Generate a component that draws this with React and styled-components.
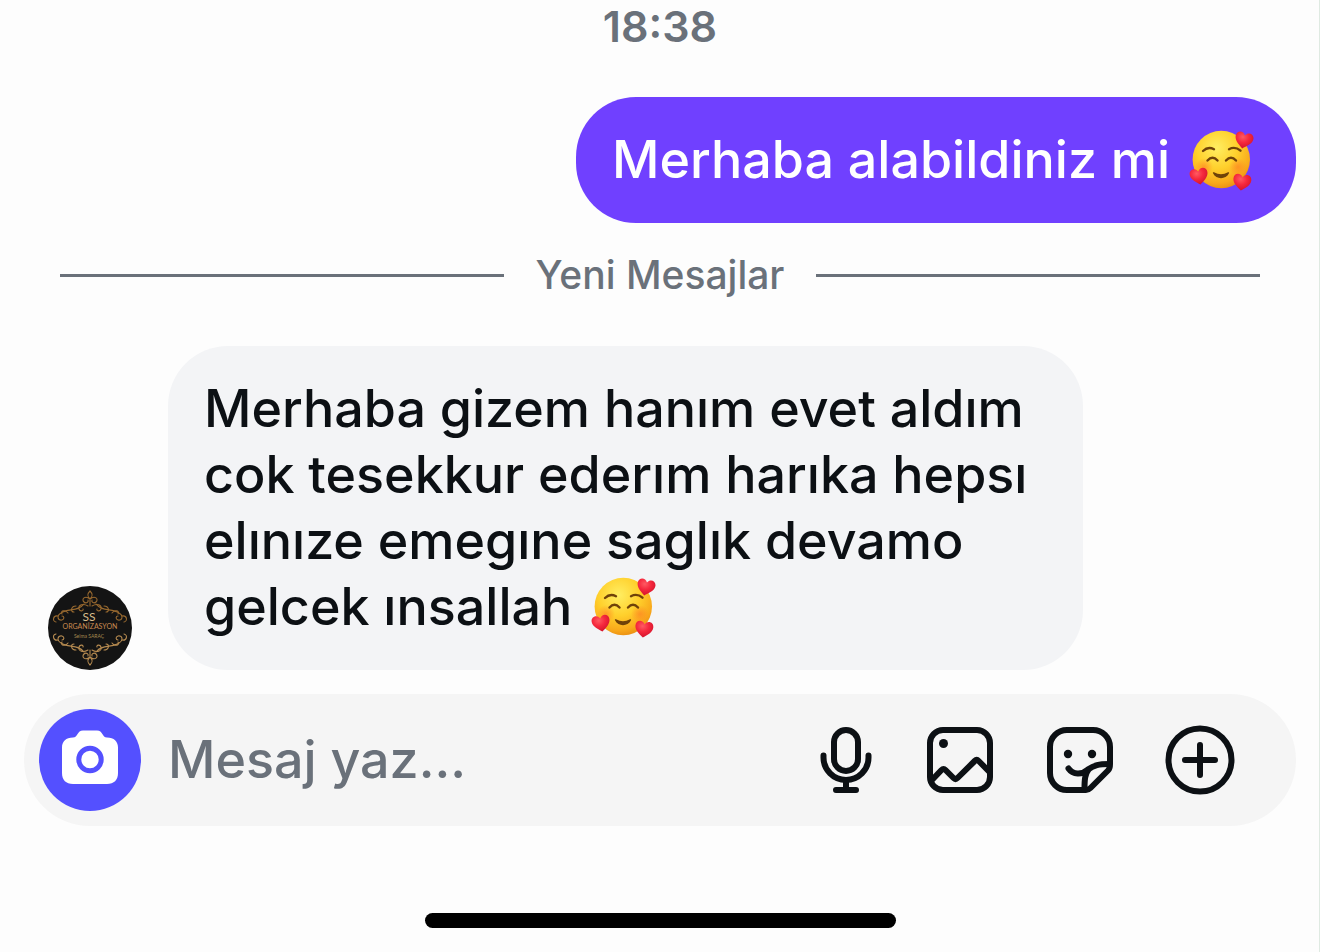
import React from "react";
import styled, { createGlobalStyle } from "styled-components";

const GlobalStyle = createGlobalStyle`
    * {
        box-sizing: border-box;
    }

    body {
        margin: 0;
        background: #fdfdfd;
        color: #0c1014;
        font-family: Inter, "Liberation Sans", sans-serif;
        font-weight: 500;
    }
`;

const Screen = styled.main`
    display: flex;
    flex-direction: column;
    min-height: 100vh;
    box-shadow: inset -1px 0 #dfeae2;
`;

const Time = styled.time`
    padding-top: 2px;
    margin-bottom: 47px;
    color: #6a717a;
    font-size: 43px;
    font-weight: 600;
    line-height: 48px;
    text-align: center;
`;

const Row = styled.div`
    display: flex;
    align-items: flex-end;
    justify-content: ${props => props.$own ? "flex-end" : "flex-start"};
    gap: 36px;
    padding: 0 24px 0 48px;
`;

const Bubble = styled.p`
    max-width: 915px;
    margin: 0;
    padding: 30px 36px;
    border-radius: 60px;
    background: ${props => props.$own ? "#7040ff" : "#f3f4f6"};
    color: ${props => props.$own ? "#ffffff" : "#0c1014"};
    font-size: 52px;
    line-height: 66px;
`;

const EmojiSvg = styled.svg`
    width: 66px;
    height: 66px;
    margin: 0 6px 0 4px;
    vertical-align: top;
`;

const Divider = styled.div`
    display: flex;
    align-items: center;
    gap: 32px;
    margin: 27px 60px 46px;
    color: #6a717a;
    font-size: 39px;
    line-height: 50px;

    &::before,
    &::after {
        content: "";
        flex: 1;
        height: 3px;
        background: #6a717a;
    }
`;

const AvatarSvg = styled.svg`
    flex: none;
    width: 84px;
    height: 84px;
`;

const Composer = styled.form`
    display: flex;
    align-items: center;
    gap: 48px;
    height: 132px;
    margin: 24px 24px 0;
    padding: 0 60px 0 15px;
    border-radius: 66px;
    background: #f5f5f5;
`;

const Field = styled.div`
    display: flex;
    flex: 1;
    align-items: center;
    gap: 27px;
    min-width: 0;
`;

const CameraButton = styled.button`
    display: flex;
    flex: none;
    align-items: center;
    justify-content: center;
    width: 102px;
    height: 102px;
    padding: 0;
    border: 0;
    border-radius: 50%;
    background: #5450ff;
`;

const MessageInput = styled.input`
    flex: 1;
    min-width: 0;
    padding: 0;
    border: 0;
    outline: 0;
    background: transparent;
    color: #0c1014;
    font-family: inherit;
    font-size: 52px;
    font-weight: inherit;
    line-height: 66px;

    &::placeholder {
        color: #6a717a;
        opacity: 1;
    }
`;

const IconButton = styled.button`
    display: flex;
    flex: none;
    padding: 0;
    border: 0;
    background: transparent;
    color: #0c1014;
`;

const HomeBar = styled.div`
    align-self: center;
    width: 471px;
    max-width: 60%;
    height: 15px;
    margin: 87px 0 24px;
    border-radius: 8px;
    background: #000000;
`;

const Heart = ({ x, y, tilt }) => (
    <path
        transform={`translate(${x} ${y}) rotate(${tilt})`}
        d="M0 8.6C-3.5 5.8-9 2.4-9-2.6-9-8.2-2.4-9.4 0-4.6 2.4-9.4 9-8.2 9-2.6 9 2.4 3.5 5.8 0 8.6z"
        fill="url(#heart)"
    />
);

const LoveFace = () => (
    <EmojiSvg viewBox="0 0 66 66" role="img" aria-label="🥰">
        <defs>
            <radialGradient id="face" cx="0.42" cy="0.3" r="0.72">
                <stop offset="0" stopColor="#ffee62" />
                <stop offset="0.5" stopColor="#ffd02c" />
                <stop offset="0.85" stopColor="#f9a91b" />
                <stop offset="1" stopColor="#ea8f12" />
            </radialGradient>
            <radialGradient id="blush">
                <stop offset="0" stopColor="#ff7a24" stopOpacity="0.6" />
                <stop offset="1" stopColor="#ff7a24" stopOpacity="0" />
            </radialGradient>
            <radialGradient id="heart" cx="0.4" cy="0.3" r="0.7">
                <stop offset="0" stopColor="#ff5a62" />
                <stop offset="0.5" stopColor="#f5283d" />
                <stop offset="1" stopColor="#d4142d" />
            </radialGradient>
        </defs>
        <circle cx="33.3" cy="32.5" r="28.7" fill="url(#face)" />
        <circle cx="16" cy="40" r="9" fill="url(#blush)" />
        <circle cx="50" cy="40" r="9" fill="url(#blush)" />
        <g fill="none" stroke="#6f4209" strokeWidth="2.4" strokeLinecap="round">
            <path d="M15 24q5-5 11-1.800" />
            <path d="M41 22.200q6-3.200 11.500 1.500" />
            <path d="M19.500 33.500q5-5.500 10 0" />
            <path d="M38 33.500q5-5.500 10 0" />
        </g>
        <path d="M26 45.300q7 4 14 0c.8-.3 1.400.2 1 1-3.200 6.500-12.800 6.500-16 0-.4-.8.200-1.300 1-1z" fill="#6f4209" />
        <Heart x={56} y={13} tilt={12} />
        <Heart x={11} y={49} tilt={-10} />
        <Heart x={54} y={55} tilt={8} />
    </EmojiSvg>
);

const Flourish = () => (
    <g fill="none" strokeLinecap="round">
        <path d="M42 5c-3 3-3 5 0 8 3-3 3-5 0-8zM42 13c-5-4-9 0-6 3 2 2 5 0 4-2M42 13c5-4 9 0 6 3-2 2-5 0-4-2M42 14v6" />
        <path d="M40 20c-5-3-10-1-9 3 1 3 5 2 4 0M44 20c5-3 10-1 9 3-1 3-5 2-4 0" />
        <path d="M36 18C30 26 20 22 13 27c-5 3-3 8 1 7 3-1 2-4 0-4M48 18c6 8 16 4 23 9 5 3 3 8-1 7-3-1-2-4 0-4" />
        <path d="M28 20c-5 0-6 6-2 6M56 20c5 0 6 6 2 6M20 27c-3-4-8-2-6 1M64 27c3-4 8-2 6 1M10 30c-5-1-6 5-2 6M74 30c5-1 6 5 2 6" />
    </g>
);

const Avatar = () => (
    <AvatarSvg viewBox="0 0 84 84" role="img" aria-label="SS Organizasyon">
        <circle cx="42" cy="42" r="42" fill="#141414" />
        <g stroke="#98692f" strokeWidth="1.1">
            <Flourish />
        </g>
        <g stroke="#b58a50" strokeWidth="1.1" transform="matrix(1 0 0 -1 0 84)">
            <Flourish />
        </g>
        <g fontFamily="Lato, sans-serif" fontWeight="400" textAnchor="middle">
            <text x="41" y="35" fontSize="12" fill="#d8bd8c">SS</text>
            <text x="42" y="43" fontSize="7" fill="#c98a50">ORGANİZASYON</text>
            <text x="41" y="52" fontSize="5" fill="#a58a50">Selma SARAÇ</text>
        </g>
    </AvatarSvg>
);

const CameraIcon = () => (
    <svg width="60" height="60" viewBox="0 0 60 60" aria-hidden="true">
        <path
            d="M23 .500h14c6 0 5 7 10 7 7 0 11 4 11 10V43c0 7-4 11-11 11H13C6 54 2 50 2 43V17.500c0-6 4-10 11-10 5 0 4-7 10-7z"
            fill="#ffffff"
        />
        <circle cx="30" cy="29.500" r="11.200" fill="none" stroke="#5450ff" strokeWidth="5" />
    </svg>
);

const Icon = ({ children }) => (
    <svg
        width="72"
        height="72"
        viewBox="0 0 72 72"
        fill="none"
        stroke="currentColor"
        strokeWidth="6"
        strokeLinecap="round"
        strokeLinejoin="round"
        aria-hidden="true"
    >
        {children}
    </svg>
);

const MicIcon = () => (
    <Icon>
        <rect x="30" y="6" width="24" height="41" rx="12" />
        <path d="M19.500 31.500v2a22.500 22.500 0 0 0 45 0v-2M42 57v8M32 66h20" />
    </Icon>
);

const PhotoIcon = () => (
    <Icon>
        <rect x="6" y="6" width="60" height="60" rx="13" />
        <circle cx="19.500" cy="19.500" r="4.500" fill="currentColor" stroke="none" />
        <path d="M7 57 17.500 46q2-2 4 0l8 8q2 2 4 0L50.700 37q2-2 4 0L65 47.500" />
    </Icon>
);

const StickerIcon = () => (
    <Icon>
        <path d="M66 40V23A17 17 0 0 0 49 6H23A17 17 0 0 0 6 23v26a17 17 0 0 0 17 17h19c2 0 3-.5 4.500-2L64 46.500c1.500-1.500 2-3 2-6.500z" />
        <path d="M24.500 44.500C29 51 38 51 44 45.500 50 41 55 40 65 40M45 45c-4 5-4.500 10-4.500 20" />
        <circle cx="24" cy="30" r="4.200" fill="currentColor" stroke="none" />
        <circle cx="48" cy="30" r="4.200" fill="currentColor" stroke="none" />
    </Icon>
);

const PlusIcon = () => (
    <Icon>
        <circle cx="36" cy="36" r="31.500" />
        <path d="M36 21v30M21 36h30" />
    </Icon>
);

const actions = [
    { label: "Sesli mesaj", icon: MicIcon },
    { label: "Fotoğraf", icon: PhotoIcon },
    { label: "Çıkartma", icon: StickerIcon },
    { label: "Daha fazla", icon: PlusIcon },
];

const App = () => {
    return (
        <>
            <GlobalStyle />
            <Screen>
                <Time>18:38</Time>
                <Row $own>
                    <Bubble $own>Merhaba alabildiniz mi <LoveFace /></Bubble>
                </Row>
                <Divider>Yeni Mesajlar</Divider>
                <Row>
                    <Avatar />
                    <Bubble>
                        Merhaba gizem hanım evet aldım cok tesekkur ederım harıka hepsı elınıze emegıne saglık devamo gelcek ınsallah <LoveFace />
                    </Bubble>
                </Row>
                <Composer onSubmit={e => e.preventDefault()}>
                    <Field>
                        <CameraButton type="button" aria-label="Kamera">
                            <CameraIcon />
                        </CameraButton>
                        <MessageInput type="text" aria-label="Mesaj" placeholder="Mesaj yaz..." />
                    </Field>
                    {actions.map(({ label, icon: ActionIcon }) => (
                        <IconButton key={label} type="button" aria-label={label}>
                            <ActionIcon />
                        </IconButton>
                    ))}
                </Composer>
                <HomeBar />
            </Screen>
        </>
    );
};

export default App;
